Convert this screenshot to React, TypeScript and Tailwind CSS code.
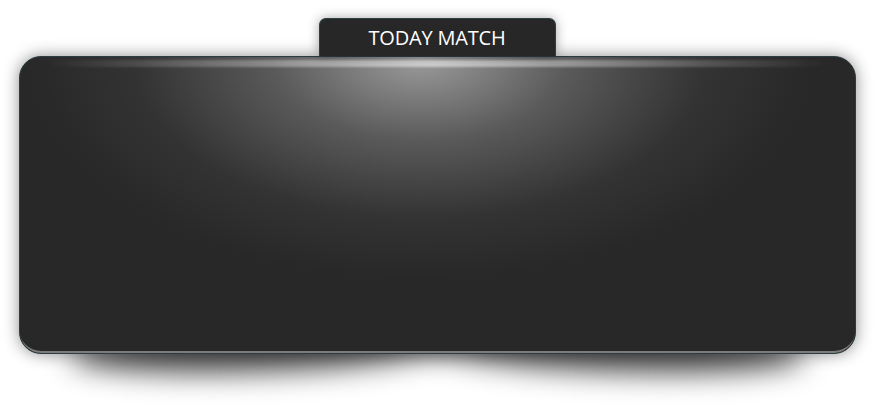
const App = () => {
  return (
    <div className="w-[874px] h-[407px] bg-white flex flex-col items-center overflow-hidden font-['Open_Sans',_'Liberation_Sans',_sans-serif]">
      <div className="mt-[18px] w-[237px] h-[38px] flex items-center justify-center rounded-t-[7px] border border-b-0 border-[#2c3f42] bg-[#272727] shadow-[0_0_12px_rgba(0,0,0,0.35)] z-10">
        <span className="text-white text-[20px] leading-none tracking-[-0.2px] pt-[1px]">TODAY MATCH</span>
      </div>

      <div className="relative w-[837px] h-[298px]">
        {/* curved shadow under the panel */}
        <div className="absolute left-[50px] bottom-[-18px] w-[380px] h-[46px] rounded-[50%] bg-black/70 blur-[14px] rotate-[-2deg]" />
        <div className="absolute right-[50px] bottom-[-18px] w-[380px] h-[46px] rounded-[50%] bg-black/70 blur-[14px] rotate-[2deg]" />

        <div className="relative h-full rounded-[22px] border border-[#2b3d40] bg-[#272727] bg-[radial-gradient(ellipse_460px_260px_at_48%_0%,#9c9c9c_0%,#5a5a5a_32%,#333_62%,#282828_85%)] shadow-[0_0_16px_rgba(0,0,0,0.45),inset_0_-3px_0_-1px_#7c7c7c] overflow-hidden">
          <div className="mt-[3px] h-[7px] bg-[linear-gradient(90deg,rgba(255,255,255,0)_3%,rgba(255,255,255,0.25)_25%,rgba(255,255,255,0.55)_50%,rgba(255,255,255,0.25)_75%,rgba(255,255,255,0)_97%)] blur-[1px]" />
        </div>
      </div>
    </div>
  );
};

export default App;
